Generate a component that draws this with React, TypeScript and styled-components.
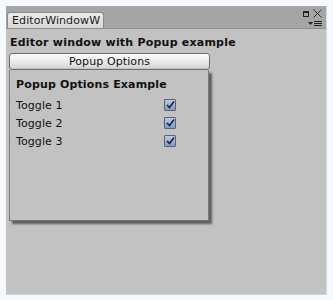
import styled, { createGlobalStyle } from 'styled-components'

const GlobalStyle = createGlobalStyle`
	html, body {
		margin: 0;
		padding: 0;
		background: #f5f8fc;
	}
	body {
		font-family: 'DejaVu Sans', Verdana, sans-serif;
		font-size: 11px;
		color: #111;
	}
`

const Frame = styled.div`
	padding: 6px;
	width: 321px;
	height: 289px;
	box-sizing: content-box;
`

const EditorWindow = styled.div`
	width: 321px;
	height: 289px;
	display: flex;
	flex-direction: column;
	background: #c2c2c2;
	border-right: 1px solid #d8d8d8;
	border-bottom: 1px solid #d8d8d8;
	box-sizing: border-box;
`

const TitleBar = styled.div`
	height: 22px;
	display: flex;
	justify-content: space-between;
	align-items: flex-end;
	background: #a5a5a5;
	border-bottom: 1px solid #8e8e8e;
	padding-left: 1px;
`

const Tab = styled.div`
	height: 16px;
	width: 97px;
	padding-left: 4px;
	box-sizing: border-box;
	display: flex;
	align-items: center;
	background: linear-gradient(#ececec, #d6d6d6);
	border: 1px solid #8a8a8a;
	border-bottom: none;
	border-radius: 3px 3px 0 0;
	color: #1a1a1a;
	white-space: nowrap;
	overflow: hidden;
	letter-spacing: 0.1px;
`

const WindowControls = styled.div`
	display: flex;
	flex-direction: column;
	align-items: flex-end;
	padding: 3px 4px 2px 0;
	align-self: stretch;
	justify-content: space-between;
`

const ControlRow = styled.div<{ $gap: number }>`
	display: flex;
	align-items: center;
	gap: ${p => p.$gap}px;
`

const Body = styled.div`
	flex: 1;
	padding: 6px 3px 0 3px;
	display: flex;
	flex-direction: column;
	align-items: flex-start;
`

const Heading = styled.div`
	font-weight: bold;
	height: 15px;
	line-height: 15px;
	padding-left: 1px;
	letter-spacing: 0.22px;
	color: #111;
`

const PopupButton = styled.button`
	margin-top: 3px;
	width: 201px;
	height: 17px;
	padding: 0;
	font-family: inherit;
	font-size: 11px;
	letter-spacing: 0.1px;
	color: #111;
	border: 1px solid #6f6f6f;
	border-radius: 3px;
	background: linear-gradient(#fdfdfd, #e6e6e6 60%, #d2d2d2);
	box-shadow: inset 0 -1px 0 rgba(0, 0, 0, 0.08);
`

const Popup = styled.div`
	width: 200px;
	height: 151px;
	box-sizing: border-box;
	background: #c2c2c2;
	border: 1px solid #7a7a7a;
	border-top: none;
	box-shadow: 3px 3px 2px rgba(60, 60, 60, 0.75);
	padding: 7px 0 0 6px;
	display: flex;
	flex-direction: column;
`

const PopupTitle = styled.div`
	font-weight: bold;
	height: 19px;
	line-height: 16px;
	letter-spacing: 0.15px;
`

const ToggleRow = styled.div`
	display: flex;
	align-items: center;
	justify-content: space-between;
	height: 18px;
	width: 160px;
	letter-spacing: 0.1px;
`

const Check = styled.span`
	width: 12px;
	height: 12px;
	box-sizing: border-box;
	border: 1px solid #5a6275;
	border-radius: 1px;
	background: linear-gradient(#b9cbe9, #7d9ac9);
	display: flex;
	align-items: center;
	justify-content: center;
`

const toggles = ['Toggle 1', 'Toggle 2', 'Toggle 3']

export default function App() {
	return (
		<>
			<GlobalStyle />
			<Frame>
				<EditorWindow>
					<TitleBar>
						<Tab>EditorWindowW</Tab>
						<WindowControls>
							<ControlRow $gap={4}>
								<svg width='6' height='6' viewBox='0 0 6 6'>
									<rect x='0.5' y='0.5' width='5' height='5' fill='none' stroke='#222' />
									<rect x='0' y='0' width='6' height='2' fill='#222' />
								</svg>
								<svg width='9' height='9' viewBox='0 0 9 9'>
									<path d='M0.5 0.5 L8.5 8.5 M8.5 0.5 L0.5 8.5' stroke='#333' strokeWidth='1' />
								</svg>
							</ControlRow>
							<ControlRow $gap={1}>
								<svg width='5' height='3' viewBox='0 0 5 3'>
									<path d='M0 0 L5 0 L2.5 3 Z' fill='#222' />
								</svg>
								<svg width='8' height='5' viewBox='0 0 8 5'>
									<path d='M0 0.5 H8 M0 2.5 H8 M0 4.5 H8' stroke='#222' strokeWidth='1' />
								</svg>
							</ControlRow>
						</WindowControls>
					</TitleBar>
					<Body>
						<Heading>Editor window with Popup example</Heading>
						<PopupButton>Popup Options</PopupButton>
						<Popup>
							<PopupTitle>Popup Options Example</PopupTitle>
							{toggles.map(label => (
								<ToggleRow key={label}>
									<span>{label}</span>
									<Check>
										<svg width='9' height='8' viewBox='0 0 9 8'>
											<path d='M1 4 L3.5 6.5 L8 0.5' fill='none' stroke='#1c2433' strokeWidth='1.6' />
										</svg>
									</Check>
								</ToggleRow>
							))}
						</Popup>
					</Body>
				</EditorWindow>
			</Frame>
		</>
	)
}
